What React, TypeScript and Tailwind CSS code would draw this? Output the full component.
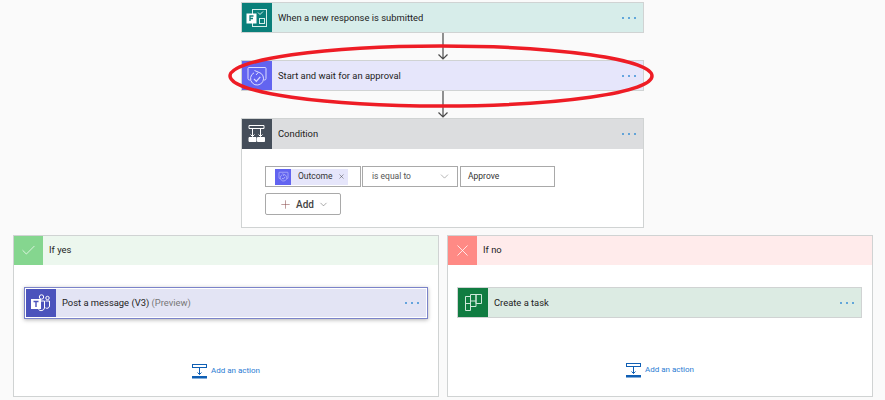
import { Check, ChevronDown, Plus, X } from 'lucide-react';
import type { ReactNode } from 'react';

const FONT = "font-['Roboto',sans-serif]";

function Dots() {
  return (
    <div className="mr-[7px] flex gap-[4px]">
      <span className="h-[2px] w-[2px] rounded-full bg-[#3a8fd6]" />
      <span className="h-[2px] w-[2px] rounded-full bg-[#3a8fd6]" />
      <span className="h-[2px] w-[2px] rounded-full bg-[#3a8fd6]" />
    </div>
  );
}

function FormsIcon() {
  return (
    <svg width="22" height="20" viewBox="0 0 22 20" fill="none" stroke="#d5eeea" strokeWidth="1">
      <rect x="6.5" y="1.5" width="14" height="17" />
      <path d="M12 4.5l2 2 3-3" />
      <rect x="13.5" y="10.5" width="5" height="5" />
      <rect x="0.5" y="5.5" width="10" height="10" fill="#fff" stroke="none" />
      <path d="M4 13V8h3.500M4 10.500h3" stroke="#0a7f7a" strokeWidth="1.300" />
    </svg>
  );
}

function ApprovalIcon({ size = 22 }: { size?: number }) {
  return (
    <svg width={size} height={size} viewBox="0 0 22 22" fill="none" stroke="#dcdcff" strokeWidth="1">
      <path d="M4.500 15H3.500A1.500 1.500 0 0 1 2 13.500V3.500A1 1 0 0 1 3 2.500h16a1 1 0 0 1 1 1v10a1.500 1.500 0 0 1-1.500 1.500H18" />
      <path d="M12.500 7.200a6.500 6.500 0 1 1-4.500 0.600" />
      <path d="M8.500 5.500L12.500 7.200 10 10" />
      <path d="M8 14l2.300 2.300 4-4.500" strokeWidth="1.200" />
    </svg>
  );
}

function ConditionIcon() {
  return (
    <svg width="20" height="20" viewBox="0 0 20 20" fill="none" stroke="#fff" strokeWidth="1">
      <path d="M2 1.500h15v3H2z" />
      <path d="M5.500 4.500v8M13.500 4.500v8" />
      <path d="M3.500 10.500l2 2 2-2M11.500 10.500l2 2 2-2" />
      <path d="M2 13.500h7v4H2zM10.500 13.500h7v4h-7z" fill="#fff" />
    </svg>
  );
}

function TeamsIcon() {
  return (
    <svg width="20" height="19" viewBox="0 0 20 19" fill="none">
      <circle cx="10.500" cy="3" r="2.200" stroke="#fff" />
      <circle cx="16.500" cy="4" r="1.700" stroke="#fff" />
      <path d="M8 7h5.500v7a3.500 3.500 0 0 1-6 1.500" stroke="#fff" />
      <path d="M14.500 7h4v5a2.500 2.500 0 0 1-4 1.800" stroke="#fff" />
      <rect x="0" y="5" width="10" height="10" fill="#fff" />
      <path d="M2.500 7.500h5M5 7.500V13" stroke="#4b53bc" strokeWidth="1.400" />
    </svg>
  );
}

function PlannerIcon() {
  return (
    <svg width="17" height="18" viewBox="0 0 17 18" fill="none" stroke="#cfe8da" strokeWidth="1">
      <path d="M0.500 2.500h5v14h-5zM5.500 0.500h5.500v12h-5.500zM11 0.500h5.500v9H11z" />
      <path d="M0.500 9.500h5M5.500 7h5.500" />
    </svg>
  );
}

function AddActionIcon() {
  return (
    <svg width="15" height="16" viewBox="0 0 15 16" fill="none" stroke="#0f5fb4" strokeWidth="1">
      <rect x="0.500" y="1.500" width="14" height="3" />
      <path d="M7.500 4.500v7M5.500 9.500l2 2 2-2" />
      <rect x="0" y="13" width="15" height="2.500" fill="#0f5fb4" stroke="none" />
    </svg>
  );
}

function Connector() {
  return (
    <div className="flex h-[27px] justify-center">
      <svg width="14" height="27" viewBox="0 0 14 27" fill="none" stroke="#4a4a4a" strokeWidth="1.200">
        <path d="M7 0v26M2.500 21.500L7 26l4.500-4.500" />
      </svg>
    </div>
  );
}

interface CardProps {
  icon: ReactNode;
  iconBg: string;
  headBg: string;
  title: ReactNode;
  className?: string;
}

function Card({ icon, iconBg, headBg, title, className = 'h-[31px] border border-[#d0d3d3]' }: CardProps) {
  return (
    <div className={`flex items-center ${headBg} ${className}`}>
      <div className={`flex h-full w-[30px] shrink-0 items-center justify-center ${iconBg}`}>{icon}</div>
      <div className="flex-1 pl-[6px] pt-px text-[9.400px] text-[#222]">{title}</div>
      <Dots />
    </div>
  );
}

function AddAction() {
  return (
    <div className="flex items-center justify-center gap-[4px] text-[8px] text-[#2b7cd3]">
      <AddActionIcon />
      <span>Add an action</span>
    </div>
  );
}

export default function App() {
  return (
    <div className={`relative h-[400px] w-[885px] overflow-hidden bg-[#fafafa] ${FONT}`}>
      {/* 상단 흐름 */}
      <div className="ml-[241px] w-[403px] pt-[2px]">
        <Card icon={<FormsIcon />} iconBg="bg-[#0a7f7a]" headBg="bg-[#d7edea]" title="When a new response is submitted" />
        <Connector />
        <Card icon={<ApprovalIcon />} iconBg="bg-[#6264f0]" headBg="bg-[#e6e6fb]" title="Start and wait for an approval" />
        <Connector />
        <div className="h-[110px] border border-[#d0d3d3] bg-white">
          <div className="flex h-[30px] items-center bg-[#dcdddf]">
            <div className="flex h-full w-[30px] items-center justify-center bg-[#454e5a]">
              <ConditionIcon />
            </div>
            <div className="flex-1 pl-[6px] pt-px text-[9.400px] text-[#222]">Condition</div>
            <Dots />
          </div>
          <div className="pl-[23px] pt-[17px]">
            <div className="flex gap-[1px] text-[8.500px] text-[#333]">
              <div className="flex h-[21px] w-[96px] items-center border border-[#a9a9a9] bg-white pl-[9px]">
                <div className="flex h-[16px] w-[16px] items-center justify-center bg-[#6264f0]">
                  <ApprovalIcon size={11} />
                </div>
                <div className="flex h-[16px] w-[57px] items-center gap-[5px] bg-[#e6e6fb] pl-[7px]">
                  <span>Outcome</span>
                  <X size={7} strokeWidth={1.500} />
                </div>
              </div>
              <div className="flex h-[21px] w-[96px] items-center justify-between border border-[#a9a9a9] bg-white pl-[9px] pr-[6px] text-[#555]">
                <span>is equal to</span>
                <ChevronDown size={13} strokeWidth={1} className="text-[#777]" />
              </div>
              <div className="ml-px flex h-[21px] w-[95px] items-center border border-[#a9a9a9] bg-white pl-[7px]">
                Approve
              </div>
            </div>
            <div className="mt-[6px] flex h-[22px] w-[76px] items-center rounded-[2px] border border-[#a9a9a9] bg-white pl-[13px] text-[10px] font-medium text-[#444]">
              <Plus size={13} strokeWidth={1} className="text-[#8a4a4a]" />
              <span className="ml-[4px]">Add</span>
              <ChevronDown size={11} strokeWidth={1} className="ml-[4px]" />
            </div>
          </div>
        </div>
      </div>

      {/* 분기 */}
      <div className="ml-[13px] mt-[7px] flex gap-[8px]">
        <div className="h-[162px] w-[426px] border border-[#d0d3d3] bg-white">
          <div className="flex h-[29px] items-center bg-[#ecf7ee]">
            <div className="flex h-full w-[29px] items-center justify-center bg-[#85d68f]">
              <Check size={17} strokeWidth={1} className="text-white" />
            </div>
            <div className="pl-[6px] text-[9.400px] text-[#222]">If yes</div>
          </div>
          <div className="px-[10px] pt-[22px]">
            <div className="h-[32px] border border-[#7b83c9] bg-white p-px shadow-[0_1px_4px_rgba(0,0,0,0.3)]">
              <Card
                icon={<TeamsIcon />}
                iconBg="bg-[#4b53bc]"
                headBg="bg-[#e3e4f4]"
                className="h-full"
                title={
                  <>
                    Post a message (V3) <span className="text-[#777]">(Preview)</span>
                  </>
                }
              />
            </div>
          </div>
          <div className="mt-[44px]">
            <AddAction />
          </div>
        </div>
        <div className="h-[162px] w-[426px] border border-[#d0d3d3] bg-white">
          <div className="flex h-[29px] items-center bg-[#ffebeb]">
            <div className="flex h-full w-[29px] items-center justify-center bg-[#ff8a85]">
              <X size={19} strokeWidth={1} className="text-white" />
            </div>
            <div className="pl-[6px] text-[9.400px] text-[#222]">If no</div>
          </div>
          <div className="pl-[9px] pr-[10px] pt-[22px]">
            <Card icon={<PlannerIcon />} iconBg="bg-[#107c41]" headBg="bg-[#dcebe3]" title="Create a task" />
          </div>
          <div className="mt-[44px]">
            <AddAction />
          </div>
        </div>
      </div>

      {/* 강조 타원 */}
      <svg className="absolute left-[226px] top-[42px]" width="430" height="68" viewBox="0 0 430 68" fill="none">
        <ellipse cx="215" cy="34" rx="211" ry="30" stroke="#ee1c25" strokeWidth="3.500" />
      </svg>
    </div>
  );
}
